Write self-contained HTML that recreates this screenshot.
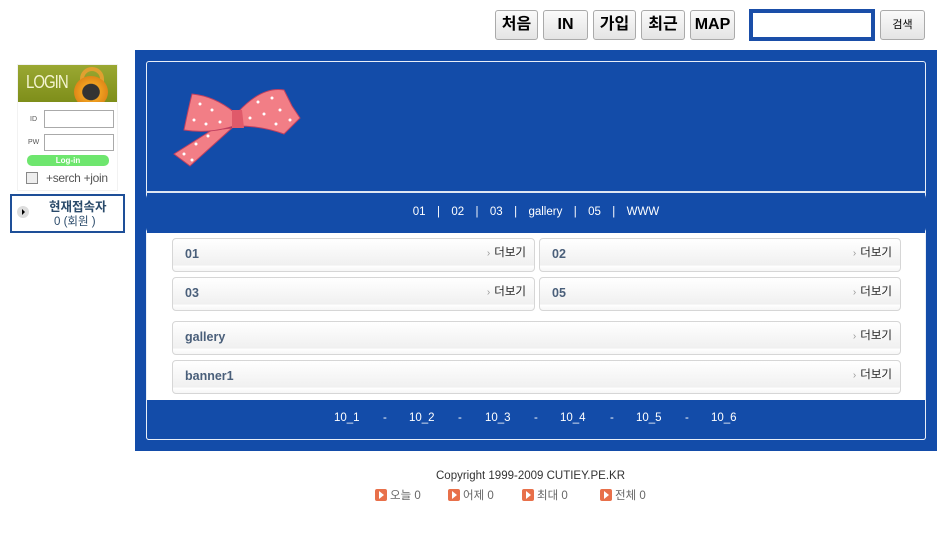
<!DOCTYPE html>
<html><head><meta charset="utf-8"><style>
*{margin:0;padding:0;box-sizing:border-box}
body{width:940px;height:556px;background:#fff;position:relative;overflow:hidden;font-family:"Liberation Sans","Noto Sans CJK KR",sans-serif;font-size:12px;color:#333}
.a{position:absolute}
.btn{position:absolute;top:10px;height:30px;border:1px solid #aaa;border-radius:3px;background:linear-gradient(#fafafa,#e4e4e4);font-weight:bold;font-size:16px;color:#000;text-align:center;line-height:28px}
.box{position:absolute;height:34px;border:1px solid #d6d6d6;border-radius:4px;background:linear-gradient(#fff,#f0f0f0 82%,#fff 84%,#f6f6f6)}
.box b{position:absolute;left:12px;top:8px;font-size:12.5px;color:#4a5f7a}
.box span{position:absolute;right:8px;top:5px;font-size:11.5px;color:#222}
.box span:before{content:"›";color:#999;font-size:10px;margin-right:4px}
.ic{display:inline-block;width:12px;height:12px;background:#e8704a;border-radius:2px;vertical-align:-2px;margin-right:3px;position:relative}
.ic:after{content:"";position:absolute;left:4px;top:2px;border-left:5px solid #fff;border-top:4px solid transparent;border-bottom:4px solid transparent}
.f{position:absolute;top:412px;color:#fff;font-size:11.5px}
</style></head><body>
<div class="btn" style="left:495px;width:43px">처음</div>
<div class="btn" style="left:543px;width:45px">IN</div>
<div class="btn" style="left:593px;width:43px">가입</div>
<div class="btn" style="left:641px;width:44px">최근</div>
<div class="btn" style="left:690px;width:45px">MAP</div>
<div class="a" style="left:749px;top:9px;width:126px;height:32px;border:4px solid #1a4ea8;background:#fff"></div>
<div class="btn" style="left:880px;width:45px;font-size:11px;font-weight:normal">검색</div>

<!-- login -->
<div class="a" style="left:17px;top:64px;width:101px;height:127px;background:#f2f2f2"></div>
<div class="a" style="left:18px;top:65px;width:99px;height:37px;background:linear-gradient(#9aa832,#7e8e1a)"></div>
<div class="a" style="left:26px;top:74px;color:#f4f4d0;font-size:15px;letter-spacing:-1px;transform:scaleY(1.2)">LOGIN</div>
<div class="a" style="left:80px;top:67px;width:24px;height:18px;border:4px solid #e0a030;border-bottom:none;border-radius:12px 12px 0 0"></div>
<div class="a" style="left:74px;top:76px;width:34px;height:32px;border-radius:50%;background:radial-gradient(#333 35%,#f0a020 38%,#d07010)"></div>
<div class="a" style="left:18px;top:102px;width:99px;height:88px;background:#fff"></div>
<div class="a" style="left:30px;top:116px;font-size:7px;color:#555">ID</div>
<div class="a" style="left:44px;top:110px;width:70px;height:18px;border:1px solid #aaa;background:#fff"></div>
<div class="a" style="left:28px;top:139px;font-size:7px;color:#555">PW</div>
<div class="a" style="left:44px;top:134px;width:70px;height:17px;border:1px solid #aaa;background:#fff"></div>
<div class="a" style="left:27px;top:155px;width:82px;height:11px;border-radius:5px;background:#6ee66e;color:#fff;font-size:8px;font-weight:bold;text-align:center;line-height:11px">Log-in</div>
<div class="a" style="left:26px;top:172px;width:12px;height:12px;border:1px solid #888;background:#eee"></div>
<div class="a" style="left:46px;top:171px;font-size:12px;color:#555;letter-spacing:-0.3px">+serch +join</div>
<div class="a" style="left:10px;top:194px;width:115px;height:39px;border:2px solid #1e4f98;background:#fff"></div>
<div class="a" style="left:17px;top:206px;width:12px;height:12px;border-radius:50%;background:#ddd"></div>
<div class="a" style="left:22px;top:209px;border-left:3px solid #000;border-top:3px solid transparent;border-bottom:3px solid transparent"></div>
<div class="a" style="left:49px;top:196px;font-weight:bold;color:#2a4a6a;font-size:12.5px">현재접속자</div>
<div class="a" style="left:54px;top:213px;color:#2a4a6a;font-size:11.5px">0 (회원 )</div>

<!-- main -->
<div class="a" style="left:135px;top:50px;width:802px;height:401px;background:#134ca9"></div>
<div class="a" style="left:146px;top:61px;width:780px;height:379px;border:1px solid #e8eef8;border-radius:3px"></div>
<div class="a" style="left:146px;top:191px;width:780px;height:2px;background:#dfe6f2"></div>
<svg class="a" style="left:172px;top:80px" width="132" height="90" viewBox="0 0 132 90">
<path d="M40 50 L2 74 L18 86 L60 48 Z" fill="#f27e86" stroke="#c04060" stroke-width="1"/>
<path d="M62 32 Q42 16 20 14 Q16 30 12 50 Q38 54 62 46 Z" fill="#f27e86" stroke="#c04060" stroke-width="1"/>
<path d="M66 32 Q90 6 112 10 L120 26 L128 38 L112 54 Q90 46 66 46 Z" fill="#f27e86" stroke="#c04060" stroke-width="1"/>
<path d="M60 30 L70 30 L72 48 L60 48 Z" fill="#e05a6a"/>
<g fill="#fff"><circle cx="28" cy="24" r="1.5"/><circle cx="40" cy="30" r="1.5"/><circle cx="22" cy="40" r="1.5"/><circle cx="48" cy="42" r="1.5"/><circle cx="34" cy="44" r="1.5"/><circle cx="12" cy="74" r="1.5"/><circle cx="24" cy="64" r="1.5"/><circle cx="36" cy="56" r="1.5"/><circle cx="20" cy="80" r="1.5"/><circle cx="86" cy="22" r="1.5"/><circle cx="100" cy="18" r="1.5"/><circle cx="92" cy="34" r="1.5"/><circle cx="108" cy="30" r="1.5"/><circle cx="118" cy="40" r="1.5"/><circle cx="104" cy="44" r="1.5"/><circle cx="78" cy="38" r="1.5"/></g>
</svg>
<div class="a" style="left:146px;top:193px;width:780px;height:40px;border-radius:5px;background:#134ca9"></div>
<div class="a" style="left:146px;top:206px;width:780px;text-align:center;color:#fff;font-size:11.5px;word-spacing:2.5px">01 &nbsp;| &nbsp;02 &nbsp;| &nbsp;03 &nbsp;| &nbsp;gallery &nbsp;| &nbsp;05 &nbsp;| &nbsp;WWW</div>
<div class="a" style="left:147px;top:233px;width:778px;height:167px;background:#fff"></div>
<div class="box" style="left:172px;top:238px;width:363px"><b>01</b><span>더보기</span></div>
<div class="box" style="left:539px;top:238px;width:362px"><b>02</b><span>더보기</span></div>
<div class="box" style="left:172px;top:277px;width:363px"><b>03</b><span>더보기</span></div>
<div class="box" style="left:539px;top:277px;width:362px"><b>05</b><span>더보기</span></div>
<div class="box" style="left:172px;top:321px;width:729px"><b>gallery</b><span>더보기</span></div>
<div class="box" style="left:172px;top:360px;width:729px"><b>banner1</b><span>더보기</span></div>
<div class="a" style="left:146px;top:400px;width:780px;height:40px;border:1px solid #e8eef8;border-top:none;border-radius:0 0 3px 3px;background:#134ca9"></div>
<div class="f" style="left:334px">10_1</div><div class="f" style="left:383px">-</div>
<div class="f" style="left:409px">10_2</div><div class="f" style="left:458px">-</div>
<div class="f" style="left:485px">10_3</div><div class="f" style="left:534px">-</div>
<div class="f" style="left:560px">10_4</div><div class="f" style="left:610px">-</div>
<div class="f" style="left:636px">10_5</div><div class="f" style="left:685px">-</div>
<div class="f" style="left:711px">10_6</div>

<div class="a" style="left:436px;top:470px;font-size:11.5px;color:#333">Copyright 1999-2009 CUTIEY.PE.KR</div>
<div class="a" style="left:375px;top:487px;font-size:11.5px;color:#666;white-space:pre"><span class="ic"></span>오늘 0</div>
<div class="a" style="left:448px;top:487px;font-size:11.5px;color:#666;white-space:pre"><span class="ic"></span>어제 0</div>
<div class="a" style="left:522px;top:487px;font-size:11.5px;color:#666;white-space:pre"><span class="ic"></span>최대 0</div>
<div class="a" style="left:600px;top:487px;font-size:11.5px;color:#666;white-space:pre"><span class="ic"></span>전체 0</div>
</body></html>
